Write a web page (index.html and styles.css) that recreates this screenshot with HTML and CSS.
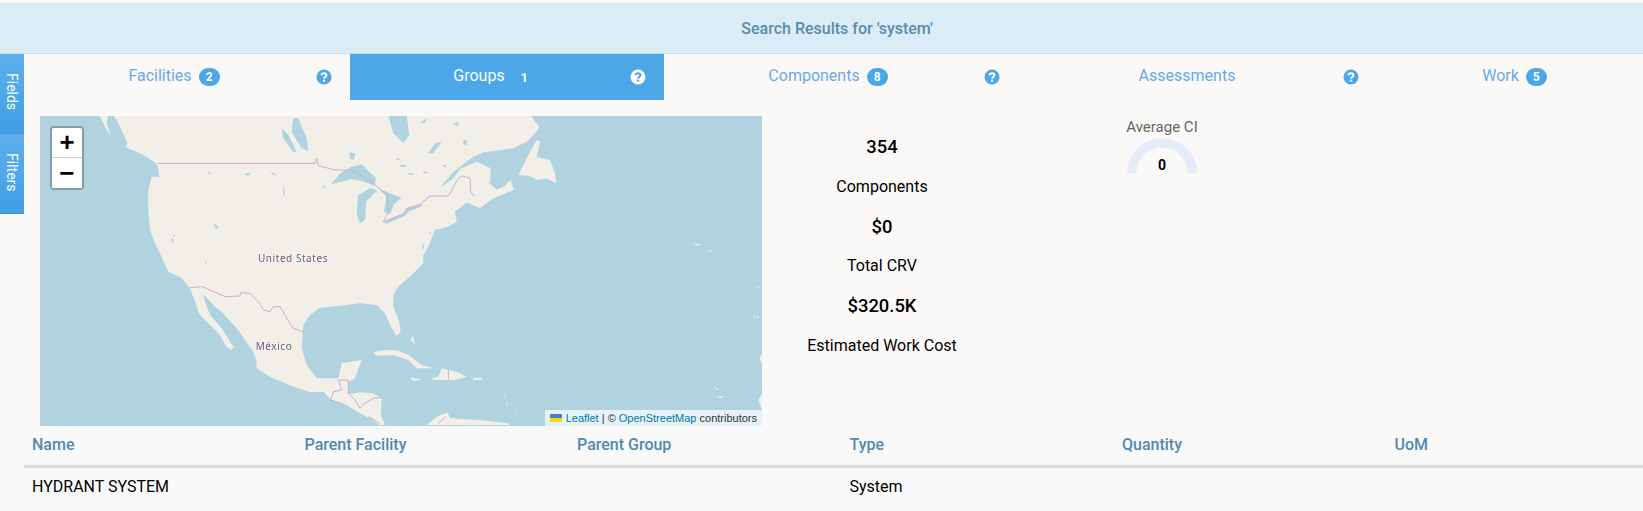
FILE: index.html
```html
<!DOCTYPE html>
<html lang="en">
<head>
<meta charset="utf-8">
<title>Search Results</title>
<link rel="stylesheet" href="styles.css">
</head>
<body>
<header class="banner">Search Results for 'system'</header>
<div class="layout">
  <nav class="rail">
    <button class="rail-tab">Fields</button>
    <button class="rail-tab">Filters</button>
  </nav>
  <main class="main">
    <div class="tabs">
      <div class="tab tab-facilities"><span class="tab-label">Facilities <b class="badge">2</b></span>
        <svg class="help" viewBox="0 0 16 16"><circle class="help-disc" cx="8" cy="8" r="7.5"/><path class="help-mark" d="M5.6 6.2C5.7 4.8 6.8 4.2 8 4.2c1.4 0 2.4.8 2.4 2 0 1.7-2.2 1.7-2.2 3.3"/><rect class="help-dot" x="7" y="10.6" width="2.2" height="2"/></svg></div>
      <div class="tab tab-groups tab-active"><span class="tab-label">Groups <b class="badge">1</b></span>
        <svg class="help" viewBox="0 0 16 16"><circle class="help-disc" cx="8" cy="8" r="7.5"/><path class="help-mark" d="M5.6 6.2C5.7 4.8 6.8 4.2 8 4.2c1.4 0 2.4.8 2.4 2 0 1.7-2.2 1.7-2.2 3.3"/><rect class="help-dot" x="7" y="10.6" width="2.2" height="2"/></svg></div>
      <div class="tab tab-components"><span class="tab-label">Components <b class="badge">8</b></span>
        <svg class="help" viewBox="0 0 16 16"><circle class="help-disc" cx="8" cy="8" r="7.5"/><path class="help-mark" d="M5.6 6.2C5.7 4.8 6.8 4.2 8 4.2c1.4 0 2.4.8 2.4 2 0 1.7-2.2 1.7-2.2 3.3"/><rect class="help-dot" x="7" y="10.6" width="2.2" height="2"/></svg></div>
      <div class="tab tab-assessments"><span class="tab-label">Assessments</span>
        <svg class="help" viewBox="0 0 16 16"><circle class="help-disc" cx="8" cy="8" r="7.5"/><path class="help-mark" d="M5.6 6.2C5.7 4.8 6.8 4.2 8 4.2c1.4 0 2.4.8 2.4 2 0 1.7-2.2 1.7-2.2 3.3"/><rect class="help-dot" x="7" y="10.6" width="2.2" height="2"/></svg></div>
      <div class="tab tab-work"><span class="tab-label">Work <b class="badge">5</b></span></div>
    </div>

    <section class="summary">
      <div class="map">
        <svg class="map-art" viewBox="0 0 722 310" aria-hidden="true">
          <g class="tiles" transform="translate(0,-1) scale(.33333)">
            <path class="land" d="M178,0 L195,35 L213,65 L200,25 L205,0 Z"/>
            <path class="land" d="M220,0 L240,35 L262,85 L258,97 L300,115 L335,135 L352,150 L358,185 L335,185 L325,225 L325,290 L330,345 L345,385 L362,420 L385,470 L425,490 L450,520 L465,560 L478,598 L495,615 L535,655 L560,695 L575,705 L580,695 L545,640 L510,600 L495,560 L490,538 L525,575 L545,590 L590,640 L640,710 L650,740 L650,760 L690,785 L760,815 L810,832 L850,830 L875,855 L920,870 L960,895 L1000,915 L1018,930 L1035,930 L1022,900 L1026,850 L1000,835 L960,832 L925,838 L925,802 L945,790 L965,735 L905,745 L895,790 L830,790 L800,750 L785,700 L790,630 L810,600 L840,578 L900,572 L960,565 L1010,570 L1035,595 L1055,640 L1070,662 L1082,650 L1078,620 L1060,575 L1060,540 L1075,515 L1115,480 L1150,445 L1150,420 L1165,395 L1185,345 L1225,335 L1250,320 L1245,290 L1280,262 L1320,280 L1360,250 L1422,225 L1412,195 L1395,212 L1370,225 L1350,205 L1352,160 L1310,140 L1270,158 L1240,190 L1300,125 L1330,112 L1420,100 L1460,80 L1490,50 L1498,35 L1470,0 Z"/>
            <path class="land" d="M1435,180 L1465,120 L1490,75 L1500,80 L1490,125 L1530,135 L1545,175 L1548,205 L1520,190 L1490,195 L1470,182 Z"/>
            <path class="land" d="M1000,712 Q1060,695 1105,720 L1145,750 L1180,760 L1130,760 L1105,735 L1060,720 L1010,722 Z"/>
            <path class="land" d="M1175,790 L1195,785 L1205,760 L1250,770 L1280,785 L1245,795 L1180,795 Z"/>
            <path class="land" d="M1110,788 L1145,793 L1120,798 Z"/>
            <path class="land" d="M1300,788 L1328,788 L1325,795 L1300,795 Z"/>
            <path class="land" d="M1160,930 L1190,905 L1222,892 L1230,910 L1320,915 L1405,925 L1408,930 Z"/>
            <path class="land" d="M1112,675 L1118,660 L1125,690 Z"/>
            <path class="land" d="M2166,715 L2158,730 L2166,748 Z M2166,835 L2155,855 L2166,885 Z M1958,388 l22,-2 l-5,6 Z M2005,405 l16,2 l-14,3 Z M2150,514 l14,2 l-12,2 Z M2140,595 l6,14 l-3,2 Z M2150,600 l8,8 l-6,2 Z M2020,812 l16,12 l-4,2 Z M2030,846 l22,-4 l-8,8 Z M1395,830 l3,14 l-3,2 Z M1400,860 l3,12 l-3,2 Z M1430,880 l3,6 l-3,2 Z"/>

            <path class="lake" d="M872,207 L905,172 L935,155 L965,148 L1008,190 L1004,212 L965,198 L935,192 L905,200 Z"/>
            <path class="lake" d="M950,295 L955,240 L990,220 L1012,226 L978,260 L976,312 L960,326 Z"/>
            <path class="lake" d="M1018,222 L1085,248 L1062,268 L1050,298 L1032,290 L1040,245 Z"/>
            <path class="lake" d="M1030,322 L1090,295 L1100,280 L1150,268 L1140,276 L1105,290 L1095,302 L1040,326 Z"/>
            <path class="lake" d="M760,10 L775,10 L800,70 L805,108 L785,100 L755,50 Z"/>
            <path class="lake" d="M725,40 L745,60 L770,110 L760,112 L730,70 Z"/>
            <path class="lake" d="M1045,0 L1100,0 L1108,60 L1090,85 L1060,55 Z"/>
            <path class="lake" d="M928,112 L945,115 L942,135 L930,132 Z"/>
            <path class="lake" d="M520,325 L535,335 L528,345 Z"/>
            <path class="lake" d="M1200,218 L1240,172 L1290,132 L1350,118 L1410,108 L1350,150 L1310,138 L1262,160 L1240,190 Z"/>
            <path class="lake" d="M1345,120 L1365,125 L1395,140 L1370,138 Z"/>
            <path class="lake" d="M1290,310 L1300,300 L1240,335 L1235,330 Z"/>
            <path class="lake" d="M1185,85 L1205,80 L1180,115 L1165,115 Z M1270,75 h10 v14 h-10 Z M1080,150 h18 v5 h-18 Z M1150,170 h12 v5 h-12 Z M1140,25 l20,-16 l-4,14 Z M1240,30 l15,-12 v14 Z M1210,150 h8 v6 h-8 Z M1105,175 h14 v4 h-14 Z"/>
            <path class="lake" d="M610,178 l24,-6 l-10,10 Z M690,168 l22,14 l-12,-2 Z M730,205 l6,40 l-6,-10 Z M505,170 h6 v6 h-6 Z M850,212 h6 v6 h-6 Z M395,370 h5 v12 h-5 Z M400,360 h5 v5 h-5 Z M495,440 h6 v5 h-6 Z M1070,130 h8 v6 h-8 Z"/>
            <path class="lake" d="M1110,690 h3 v6 h-3 Z"/>
            <path class="lake" d="M1148,380 l6,24 l-8,-8 Z M1170,345 l5,20 l-6,-10 Z M1340,200 l18,4 l-2,6 Z"/>

            <path class="border" d="M352,145 L825,145 L830,130 L835,152 L885,165 L935,165 L1000,205 L1040,240 L1045,290 L1030,320 L1095,295 L1100,280 L1140,268 L1170,243 L1225,243 L1255,190 L1268,183 L1290,190 L1292,230 L1303,243"/>
            <path class="border" d="M450,518 L488,515 L555,545 L600,543 L602,533 L630,535 L660,565 L670,585 L690,590 L700,575 L720,575 L750,625 L760,640 L790,650"/>
            <path class="border" d="M925,795 L895,795 L905,825 L880,830 L873,855 L910,868 M925,795 L925,835 L945,855 L960,880 L975,865 L1000,850 L1028,848 M985,905 L1020,925 M1225,765 L1225,795 M1218,905 L1195,925"/>
          </g>
          <text class="place" x="253" y="146">United States</text>
          <text class="place" x="234" y="234">México</text>
        </svg>
        <div class="zoom">
          <span class="zoom-btn zoom-in">+</span>
          <span class="zoom-btn">−</span>
        </div>
        <div class="attribution"><svg class="flag" viewBox="0 0 12 8"><rect class="flag-blue" width="12" height="4"/><rect class="flag-yellow" y="4" width="12" height="4"/></svg> <a>Leaflet</a> <span class="sep">|</span> © <a>OpenStreetMap</a> contributors</div>
      </div>

      <div class="stats">
        <div class="stat-value">354</div>
        <div class="stat-label">Components</div>
        <div class="stat-value">$0</div>
        <div class="stat-label">Total CRV</div>
        <div class="stat-value">$320.5K</div>
        <div class="stat-label">Estimated Work Cost</div>
      </div>

      <div class="gauge">
        <div class="gauge-title">Average CI</div>
        <div class="gauge-dial">
          <svg class="gauge-arc" viewBox="0 0 70 36"><path d="M0 36A35 35 0 0 1 70 36H60.500A25.500 25.500 0 0 0 9.500 36Z"/></svg>
          <span class="gauge-value">0</span>
        </div>
      </div>
    </section>

    <div class="table">
      <div class="table-head">
        <div>Name</div><div>Parent Facility</div><div>Parent Group</div><div>Type</div><div>Quantity</div><div>UoM</div>
      </div>
      <div class="table-row">
        <div>HYDRANT SYSTEM</div><div></div><div></div><div>System</div><div></div><div></div>
      </div>
    </div>
  </main>
</div>
</body>
</html>
```
FILE: styles.css
```css
* { box-sizing: border-box; }
html, body { margin: 0; height: 100%; }
body {
  background: #fbf9f8;
  font-family: Roboto, "Liberation Sans", sans-serif;
  font-size: 16px;
  color: #000;
  overflow: hidden;
}
.banner {
  margin-top: 3px;
  height: 51px;
  padding-left: 31px;
  background: #daedf7;
  border-top: 1px solid #d9e6ec;
  border-bottom: 1px solid #c5e2f0;
  display: flex;
  align-items: center;
  justify-content: center;
  color: #5b8cab;
  font-weight: 500;
  font-size: 16px;
}
.layout { display: flex; }
.rail { width: 24px; flex: none; display: flex; flex-direction: column; }
.rail-tab {
  height: 80px;
  width: 24px;
  padding: 19px 0 0;
  border: 0;
  border-bottom: 1px solid #3a93d6;
  background: linear-gradient(#5eaeea, #3f9fe6);
  color: #fff;
  font: 14px Roboto, sans-serif;
  writing-mode: vertical-rl;
  text-align: start;
  display: flex;
  align-items: center;
  justify-content: flex-start;
}
.main { flex: 1; min-width: 0; }
.tabs { display: flex; height: 46px; }
.tab {
  display: grid;
  grid-template-columns: 1fr 16px;
  align-items: center;
  padding: 0 18px 0 8px;
  color: #68a9ec;
  font-size: 16px;
}
.tab-facilities { width: 326px; }
.tab-groups { width: 314px; }
.tab-components { width: 354px; }
.tab-assessments { width: 359px; padding-left: 13px; }
.tab-work { width: 266px; grid-template-columns: 1fr; padding: 0 0 0 9px; }
.tab-active { background: #4ba7e8; color: #fff; }
.tab-label { justify-self: center; display: flex; align-items: center; gap: 3px; white-space: pre; margin-top: -3px; }
.badge {
  min-width: 21px;
  height: 18px;
  border-radius: 9px;
  background: #4ba7e8;
  color: #fff;
  font-size: 12px;
  font-weight: 700;
  display: inline-flex;
  align-items: center;
  justify-content: center;
  margin-top: 3px;
}
.tab-active .badge { background: transparent; margin-left: 2px; font-size: 13px; }
.help { width: 16px; height: 16px; display: block; margin-top: -1px; }
.help-disc { fill: #4ba7e8; }
.help-mark { fill: none; stroke: #fff; stroke-width: 2.1; }
.help-dot { fill: #fff; }
.tab-active .help-disc { fill: #fff; }
.tab-active .help-mark { stroke: #4ba7e8; }
.tab-active .help-dot { fill: #4ba7e8; }

.summary { display: flex; margin: 16px 0 0 16px; height: 310px; }
.map { position: relative; width: 722px; height: 310px; background: #b0d3df; flex: none; overflow: hidden; }
.map-art { display: block; width: 100%; height: 100%; filter: blur(.35px); }
.land { fill: #f2efe9; }
.lake { fill: #b0d3df; }
.border { fill: none; stroke: #c5b3c6; stroke-width: 3; }
.place {
  font: 10px "Noto Sans", sans-serif;
  letter-spacing: .55px;
  fill: #6e5578;
  stroke: #f7f5f1;
  stroke-width: 2px;
  paint-order: stroke;
  text-anchor: middle;
}
.zoom {
  position: absolute;
  left: 10px;
  top: 10px;
  width: 34px;
  border: 2px solid rgba(0, 0, 0, .25);
  border-radius: 4px;
  background-clip: padding-box;
  display: flex;
  flex-direction: column;
}
.zoom-btn {
  height: 30px;
  padding-top: 3px;
  background: #fff;
  display: flex;
  align-items: center;
  justify-content: center;
  font: 700 26px "Liberation Mono", monospace;
}
.zoom-in { border-bottom: 1px solid #ccc; border-radius: 2px 2px 0 0; }
.attribution {
  position: absolute;
  right: 0;
  bottom: 0;
  height: 16px;
  padding: 0 5px;
  background: rgba(255, 255, 255, .7);
  color: #333;
  font: 11px/16px "Liberation Sans", Arial, sans-serif;
  white-space: nowrap;
}
.attribution a { color: #0078a8; }
.flag { width: 12px; height: 8px; display: inline-block; margin-right: 1px; }
.flag-blue { fill: #4c7be1; }
.flag-yellow { fill: #ffd500; }

.stats {
  width: 240px;
  flex: none;
  padding-top: 11px;
  display: grid;
  grid-auto-rows: 39.7px;
  align-items: center;
  justify-items: center;
}
.stat-value { font-size: 18.4px; font-weight: 500; }
.stat-label { font-size: 16px; }
.gauge { width: 320px; flex: none; display: flex; flex-direction: column; align-items: center; padding-top: 1px; }
.gauge-title { color: #666; font-size: 15px; line-height: 20px; }
.gauge-dial { position: relative; width: 70px; height: 36px; }
.gauge-arc { display: block; width: 70px; height: 36px; fill: #e6ebf8; }
.gauge-value {
  position: absolute;
  left: 0;
  right: 0;
  top: 19px;
  text-align: center;
  font-size: 14px;
  font-weight: 700;
  line-height: 18px;
}
.table { background: #f9f9f9; height: 85px; overflow: hidden; }
.table-head, .table-row {
  display: grid;
  grid-template-columns: repeat(6, 272.5px);
  padding-left: 8px;
  align-items: center;
}
.table-head {
  height: 42px;
  border-bottom: 3px solid #dcdcdc;
  color: #5189b0;
  font-weight: 500;
  font-size: 16px;
  padding-bottom: 3px;
}
.table-row { height: 37px; font-size: 16px; padding-bottom: 1px; }
```
